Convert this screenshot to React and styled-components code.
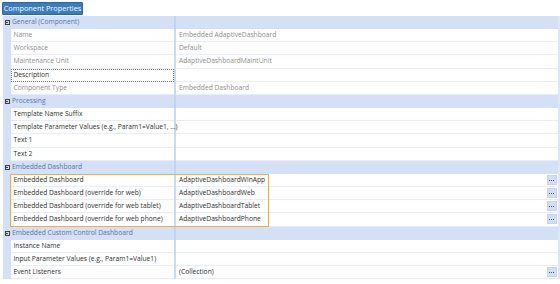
import React from 'react'
import styled, { createGlobalStyle } from 'styled-components'

const Global = createGlobalStyle`
body {
  margin : 0;
  background : #ffffff;
  font-family : "Open Sans", "Noto Sans", sans-serif;
}
`

const Page = styled.div`
width : 560px;
height : 284px;
overflow : hidden;
padding-top : 2px;
box-sizing : border-box;
`

const TabButton = styled.div`
margin-left : 2px;
width : 81px;
height : 13px;
box-sizing : border-box;
background : #3a7cc0;
border : solid 1px #2d65a3;
border-radius : 1px;
color : #ffffff;
font-size : 7.3px;
line-height : 11px;
text-align : center;
white-space : nowrap;
`

const Grid = styled.div`
margin-top : 1px;
margin-left : 3px;
width : 555px;
border-right : solid 2px #dfe7f6;
`

const Row = styled.div`
display : flex;
height : 13.16px;
background : ${p => (p.$header ? '#d4e0f6' : '#ffffff')};
font-size : 6.7px;
line-height : 12.6px;
white-space : nowrap;
`

const Gutter = styled.div`
width : 8px;
flex : none;
background : #d4e0f6;
display : flex;
align-items : center;
justify-content : center;
`

const Label = styled.div`
width : 163px;
flex : none;
box-sizing : border-box;
padding-left : ${p => (p.$header ? '1px' : '2.5px')};
color : ${p => (p.$header ? '#5873a8' : p.$dim ? '#8d8d8d' : '#2e2e2e')};
border-bottom : solid 1px ${p => (p.$header ? '#d4e0f6' : '#e6ecf8')};
position : relative;
z-index : 1;
outline : ${p => (p.$focus ? 'dotted 1px #7a7a7a' : 'none')};
outline-offset : -1px;
`

const Splitter = styled.div`
width : 2px;
flex : none;
background : ${p => (p.$header ? '#c3d3ef' : '#cbd9f2')};
`

const Value = styled.div`
flex : 1;
display : flex;
align-items : center;
justify-content : space-between;
box-sizing : border-box;
padding-left : 3px;
padding-right : 1px;
color : ${p => (p.$dim ? '#8d8d8d' : '#2e2e2e')};
border-bottom : solid 1px ${p => (p.$header ? '#d4e0f6' : '#e6ecf8')};
`

const Collapse = styled.div`
width : 5px;
height : 5px;
box-sizing : border-box;
border : solid 1px #3d3d3d;
position : relative;
&::after {
  content : '';
  position : absolute;
  left : 0.5px;
  right : 0.5px;
  top : 1px;
  height : 1px;
  background : #3d3d3d;
}
`

const Ellipsis = styled.div`
width : 10.5px;
height : 10px;
background : #d2def4;
border : solid 1px #c5d4ef;
box-sizing : border-box;
display : flex;
align-items : center;
justify-content : center;
gap : 1px;
padding-top : 1px;
`

const Dot = styled.span`
width : 1px;
height : 1px;
background : #3f5a8f;
`

const Highlight = styled.div`
position : relative;
`

const HighlightBox = styled.div`
position : absolute;
left : 7px;
top : 0;
width : 259px;
height : 100%;
box-sizing : border-box;
border : solid 1.5px #f3ad3d;
pointer-events : none;
z-index : 2;
`

const sections = [
  {
    title : 'General (Component)',
    rows : [
      { label : 'Name', value : 'Embedded AdaptiveDashboard', dim : true },
      { label : 'Workspace', value : 'Default', dim : true },
      { label : 'Maintenance Unit', value : 'AdaptiveDashboardMaintUnit', dim : true },
      { label : 'Description', value : '', focus : true },
      { label : 'Component Type', value : 'Embedded Dashboard', dim : true }
    ]
  },
  {
    title : 'Processing',
    rows : [
      { label : 'Template Name Suffix', value : '' },
      { label : 'Template Parameter Values (e.g., Param1=Value1, ...)', value : '' },
      { label : 'Text 1', value : '' },
      { label : 'Text 2', value : '' }
    ]
  },
  {
    title : 'Embedded Dashboard',
    highlight : true,
    rows : [
      { label : 'Embedded Dashboard', value : 'AdaptiveDashboardWinApp', button : true },
      { label : 'Embedded Dashboard (override for web)', value : 'AdaptiveDashboardWeb', button : true },
      { label : 'Embedded Dashboard (override for web tablet)', value : 'AdaptiveDashboardTablet', button : true },
      { label : 'Embedded Dashboard (override for web phone)', value : 'AdaptiveDashboardPhone', button : true }
    ]
  },
  {
    title : 'Embedded Custom Control Dashboard',
    rows : [
      { label : 'Instance Name', value : '' },
      { label : 'Input Parameter Values (e.g., Param1=Value1)', value : '' },
      { label : 'Event Listeners', value : '(Collection)', button : true }
    ]
  }
]

function PropRow({ r }) {
  return (
    <Row>
      <Gutter />
      <Label $dim={r.dim} $focus={r.focus}>{r.label}</Label>
      <Splitter />
      <Value $dim={r.dim}>
        <span>{r.value}</span>
        {r.button && <Ellipsis><Dot /><Dot /><Dot /></Ellipsis>}
      </Value>
    </Row>
  )
}

function App() {
  return (
    <Page>
      <Global />
      <TabButton>Component Properties</TabButton>
      <Grid>
        {sections.map((s) => {
          const rows = s.rows.map((r) => <PropRow key={r.label} r={r} />)
          return (
            <div key={s.title}>
              <Row $header>
                <Gutter><Collapse /></Gutter>
                <Label $header>{s.title}</Label>
                <Splitter $header />
                <Value $header />
              </Row>
              {s.highlight ? (
                <Highlight>
                  {rows}
                  <HighlightBox />
                </Highlight>
              ) : rows}
            </div>
          )
        })}
      </Grid>
    </Page>
  )
}

export default App
